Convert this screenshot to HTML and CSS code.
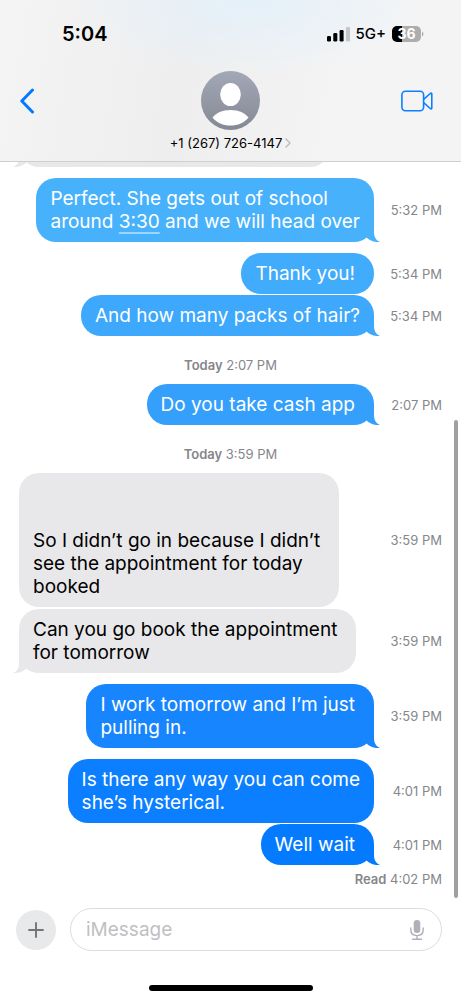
FILE: index.html
```html
<!DOCTYPE html>
<html lang="en">
<head>
<meta charset="utf-8">
<meta name="viewport" content="width=device-width, initial-scale=1">
<title>Messages</title>
<link rel="stylesheet" href="styles.css">
</head>
<body>
<svg class="defs" aria-hidden="true">
  <symbol id="tail" viewBox="0 0 16 20"><path d="M10 0V10C10 15 12 18.500 16 20C11 20.500 6 19 2.500 15.600L2 8Z"/></symbol>
</svg>
<div class="phone">
  <header class="header">
    <div class="status">
      <span class="clock">5:04</span>
      <div class="indicators">
        <svg width="23" height="15" viewBox="0 0 23 15" aria-hidden="true">
          <rect x="0" y="9" width="4" height="5.500" rx="1.200"/>
          <rect x="6.300" y="6" width="4" height="8.500" rx="1.200"/>
          <rect x="12.600" y="3" width="4" height="11.500" rx="1.200"/>
          <rect x="19" y="0" width="4" height="14.500" rx="1.200" fill="#c4c6c8"/>
        </svg>
        <span class="network">5G+</span>
        <div class="battery">
          <span class="level">36</span>
          <svg width="3" height="6" viewBox="0 0 3 6" aria-hidden="true"><path d="M1 0.500C3 1.500 3 4.500 1 5.500Z" fill="#adadad"/></svg>
        </div>
      </div>
    </div>
    <nav class="nav">
      <button class="icon-button" aria-label="Back">
        <svg width="16" height="26" viewBox="0 0 16 26"><path d="M12.500 2L1.800 13L12.500 24" fill="none" stroke="#007aff" stroke-width="3" stroke-linecap="round" stroke-linejoin="round"/></svg>
      </button>
      <button class="contact">
        <svg width="59" height="59" viewBox="0 0 59 59" aria-hidden="true">
          <defs>
            <linearGradient id="face" x1="0" y1="0" x2="0" y2="1"><stop offset="0" stop-color="#a3a8b7"/><stop offset="1" stop-color="#858994"/></linearGradient>
          </defs>
          <circle cx="29.500" cy="29.500" r="29.500" fill="url(#face)"/>
          <ellipse cx="29.500" cy="23.500" rx="10.300" ry="11.500" fill="#fff"/>
          <path d="M11.500 46.500C15 42 21 39 29.500 39S44 42 47.500 46.500C43 52 37 54.500 29.500 54.500S16 52 11.500 46.500Z" fill="#fff"/>
        </svg>
        <span class="number">+1 (267) 726-4147
          <svg width="6" height="10" viewBox="0 0 6 10" aria-hidden="true"><path d="M1 1L5 5L1 9" fill="none" stroke="#b9b9bc" stroke-width="1.300" stroke-linecap="round" stroke-linejoin="round"/></svg>
        </span>
      </button>
      <button class="icon-button" aria-label="Video call">
        <svg width="32" height="22" viewBox="0 0 32 22" fill="none" stroke="#0a7fff" stroke-width="1.600" stroke-linejoin="round"><rect x="0.900" y="1.200" width="21.700" height="19.500" rx="3.500"/><path d="M22.600 9.300L29.300 3.500Q30.800 2.600 30.800 4V18Q30.800 19.400 29.300 18.500L22.600 12.700"/></svg>
      </button>
    </nav>
  </header>

  <main class="thread">
    <div class="row received"><div class="bubble clipped"><svg class="tail"><use href="#tail"/></svg></div></div>
    <div class="row sent new-group"><p class="bubble tone1">Perfect. She gets out of school<br>around <a class="detected" href="#">3:30</a> and we will head over<svg class="tail"><use href="#tail"/></svg></p><time>5:32 PM</time></div>
    <div class="row sent new-group"><p class="bubble trailing tone2">Thank you!</p><time>5:34 PM</time></div>
    <div class="row sent"><p class="bubble tone3">And how many packs of hair?<svg class="tail"><use href="#tail"/></svg></p><time>5:34 PM</time></div>
    <p class="day"><b>Today</b> 2:07 PM</p>
    <div class="row sent"><p class="bubble trailing tone4">Do you take cash app<svg class="tail"><use href="#tail"/></svg></p><time>2:07 PM</time></div>
    <p class="day"><b>Today</b> 3:59 PM</p>
    <div class="row received"><p class="bubble trailing tall">So I didn’t go in because I didn’t<br>see the appointment for today<br>booked</p><time>3:59 PM</time></div>
    <div class="row received"><p class="bubble trailing">Can you go book the appointment<br>for tomorrow<svg class="tail"><use href="#tail"/></svg></p><time>3:59 PM</time></div>
    <div class="row sent new-group"><p class="bubble trailing tone5">I work tomorrow and I’m just<br>pulling in.<svg class="tail"><use href="#tail"/></svg></p><time>3:59 PM</time></div>
    <div class="row sent new-group"><p class="bubble tone6">Is there any way you can come<br>she’s hysterical.</p><time>4:01 PM</time></div>
    <div class="row sent"><p class="bubble trailing tone7">Well wait<svg class="tail"><use href="#tail"/></svg></p><time>4:01 PM</time></div>
    <p class="receipt"><b>Read</b> 4:02 PM</p>
    <div class="scrollbar"></div>
  </main>

  <footer class="composer">
    <button class="plus" aria-label="Add attachment">
      <svg width="16" height="16" viewBox="0 0 16 16"><path d="M8 1V15M1 8H15" stroke="#737579" stroke-width="1.900" stroke-linecap="round"/></svg>
    </button>
    <div class="field">
      <input type="text" placeholder="iMessage" aria-label="iMessage">
      <button class="mic" aria-label="Dictate">
        <svg width="14" height="20" viewBox="0 0 14 20" fill="none" stroke="#aeb1b8" stroke-width="1.400" stroke-linecap="round"><rect x="3.700" y="0" width="6.600" height="13" rx="3.300" fill="#aeb1b8" stroke="none"/><path d="M0.800 8V9.800C0.800 13.500 3.300 15.600 7 15.600S13.200 13.500 13.200 9.800V8M7 15.600V19M2.600 19.200H11.400"/></svg>
      </button>
    </div>
  </footer>
  <div class="home-indicator"></div>
</div>
</body>
</html>
```
FILE: styles.css
```css
* { box-sizing: border-box; }
body {
  margin: 0;
  background: #fff;
  color: #000;
  font-family: Inter, "Liberation Sans", sans-serif;
}
p { margin: 0; }
button { padding: 0; border: 0; background: none; color: inherit; font: inherit; }
svg { display: block; }
.defs { position: absolute; width: 0; height: 0; }

.phone { display: flex; flex-direction: column; height: 100vh; }

.header {
  flex: none;
  padding: 22px 20px 9px;
  border-bottom: 1px solid #cfcfd1;
  background: radial-gradient(ellipse 180px 75px at 54% 0, #e4f1fa, transparent), linear-gradient(100deg, #f4f4f4, #eeeeef 40%, #f4f4f5 75%);
}
.status { display: flex; align-items: center; justify-content: space-between; height: 24px; padding: 0 17px 0 42px; }
.clock { font-size: 20px; font-weight: 600; line-height: 24px; }
.indicators { display: flex; align-items: center; gap: 6px; }
.network { font-size: 15px; font-weight: 500; line-height: 18px; }
.battery { display: flex; align-items: center; }
.level {
  width: 29px;
  border-radius: 5px;
  background: linear-gradient(90deg, #000 36%, #adadad 36%);
  color: #fff;
  font-size: 14px;
  font-weight: 700;
  line-height: 16px;
  text-align: center;
}
.nav { display: grid; grid-template-columns: 1fr auto 1fr; padding-top: 25px; }
.icon-button { height: 59px; }
.icon-button:first-child { justify-self: start; }
.icon-button:last-child { justify-self: end; margin-right: 8px; }
.contact { display: flex; flex-direction: column; align-items: center; gap: 4px; }
.number { display: flex; align-items: center; gap: 3px; font-size: 13px; line-height: 18px; }

.thread {
  position: relative;
  display: flex;
  flex: 1;
  flex-direction: column;
  justify-content: flex-end;
  gap: 1px;
  min-height: 0;
  padding: 0 19px;
  overflow: hidden;
}
.row { display: flex; flex: none; align-items: center; }
.sent { justify-content: flex-end; }
.received { justify-content: space-between; }
.received + .received { margin-top: 1px; }
.new-group { margin-top: 10px; }
.bubble {
  --fill: #e8e8ea;
  position: relative;
  padding: 9px 14px;
  border-radius: 20px;
  background: var(--fill);
  font-size: 19px;
  line-height: 23px;
  white-space: nowrap;
}
.trailing { padding-right: 19px; }
.sent .bubble { color: #fff; }
.sent .tone1 { --fill: #47b2fb; }
.sent .tone2 { --fill: #41abfc; }
.sent .tone3 { --fill: #3da8fc; }
.sent .tone4 { --fill: #359ffc; }
.sent .tone5 { --fill: #1685fe; }
.sent .tone6 { --fill: #0b7fff; }
.sent .tone7 { --fill: #047bff; }
.tall { padding-top: 56px; }
.clipped { width: 311px; height: 41px; }
.detected { color: inherit; text-decoration: underline 2px #9ad5fd; text-underline-offset: 4px; text-decoration-skip-ink: none; }
.tail { position: absolute; right: -6px; bottom: 0; width: 16px; height: 20px; fill: var(--fill); }
.received .tail { right: auto; left: -6px; transform: scaleX(-1); }
time, .day, .receipt { color: #86868b; font-size: 13px; line-height: 16px; white-space: nowrap; }
time { width: 68px; text-align: right; }
.day { flex: none; padding: 20px 0 10px; text-align: center; }
.receipt { flex: none; padding: 5px 0 11px; text-align: right; }
b { font-weight: 600; }
.scrollbar { position: absolute; right: 3px; bottom: 0; width: 4px; height: 65%; border-radius: 2px; background: #a0a0a2; }

.composer { display: flex; flex: none; align-items: center; gap: 14px; padding: 10px 19px 34px 16px; }
.plus { display: grid; flex: none; place-items: center; width: 40px; height: 40px; border-radius: 50%; background: #e8e9eb; }
.field { display: flex; flex: 1; align-items: center; height: 43px; padding: 0 17px 0 15px; border: 1px solid #dcdcde; border-radius: 22px; }
.field input { flex: 1; min-width: 0; padding: 0; border: 0; outline: 0; background: none; font: 19px/23px Inter, "Liberation Sans", sans-serif; }
.field input::placeholder { color: #c0c0c3; opacity: 1; }
.home-indicator { flex: none; align-self: center; width: 164px; height: 6px; margin-bottom: 9px; border-radius: 3px; background: #000; }
```
